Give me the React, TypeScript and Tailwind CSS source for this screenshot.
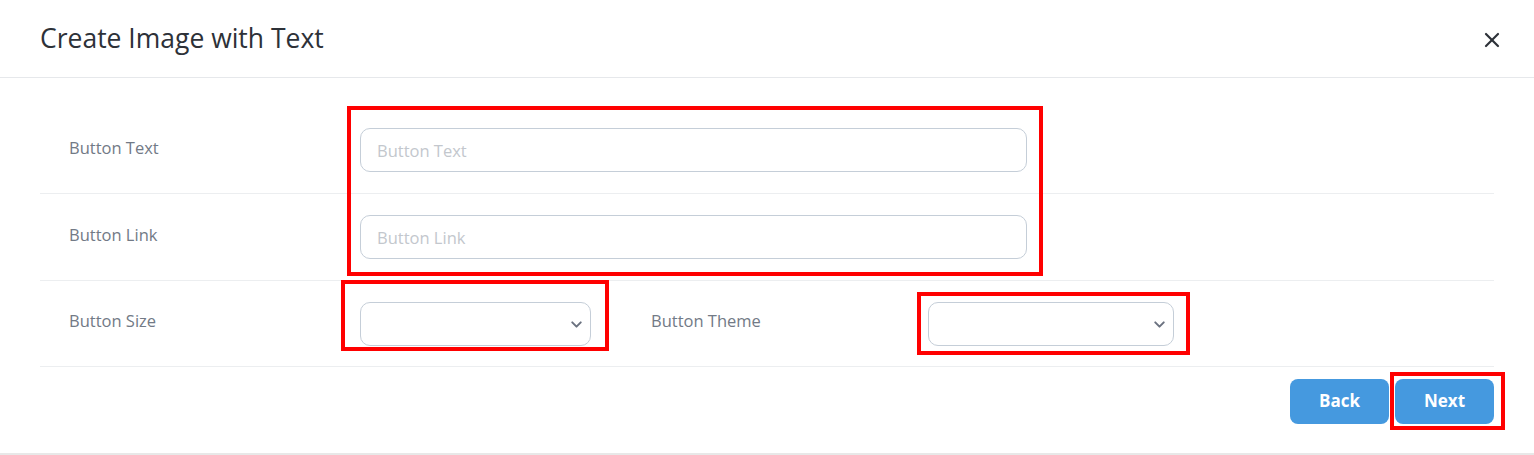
import { X, ChevronDown } from 'lucide-react';

const font = { fontFamily: '"Open Sans", "Noto Sans", sans-serif' };

function Field({ placeholder }: { placeholder: string }) {
  return (
    <input
      placeholder={placeholder}
      className="h-[44px] w-[667px] rounded-[10px] border border-[#c5ced8] px-4 text-[16.5px] text-[#4a5568] placeholder:text-[#c3c7cd] outline-none"
    />
  );
}

function Select({ width }: { width: string }) {
  return (
    <div className={`relative h-[44px] ${width} rounded-[10px] border border-[#c5ced8] bg-white`}>
      <ChevronDown className="absolute right-[5px] top-[13px] h-[17px] w-[17px] text-[#6b7280]" strokeWidth={2.8} />
    </div>
  );
}

export default function App() {
  return (
    <div className="relative h-[455px] w-full bg-white" style={font}>
      {/* header */}
      <div className="flex h-[78px] items-center justify-between border-b border-[#e6e8eb] pl-[40px] pr-[30px]">
        <h1 className="text-[26.5px] text-[#2d3138]">Create Image with Text</h1>
        <X className="mt-[2px] h-[24px] w-[24px] text-[#2d3138]" strokeWidth={2.2} />
      </div>

      {/* body */}
      <div className="px-[40px] pt-[29px]">
        <div className="flex h-[87px] items-center border-b border-[#eceef0] pl-[29px]">
          <div className="w-[291px] pb-[4px] text-[16.5px] text-[#727a86]">Button Text</div>
          <Field placeholder="Button Text" />
        </div>
        <div className="flex h-[87px] items-center border-b border-[#eceef0] pl-[29px]">
          <div className="w-[291px] pb-[4px] text-[16.5px] text-[#727a86]">Button Link</div>
          <Field placeholder="Button Link" />
        </div>
        <div className="flex h-[86px] items-center border-b border-[#eceef0] pl-[29px]">
          <div className="w-[291px] pb-[4px] text-[16.5px] text-[#727a86]">Button Size</div>
          <Select width="w-[231px]" />
          <div className="ml-[60px] w-[277px] pb-[4px] text-[16.5px] text-[#727a86]">Button Theme</div>
          <Select width="w-[246px]" />
        </div>
        <div className="flex justify-end gap-[6px] pt-[12px]">
          <button className="h-[45px] w-[99px] rounded-[8px] bg-[#4599df] pb-[2px] text-[17px] font-bold text-white">Back</button>
          <button className="h-[45px] w-[99px] rounded-[8px] bg-[#4599df] pb-[2px] text-[17px] font-bold text-white">Next</button>
        </div>
      </div>

      <div className="absolute bottom-0 left-0 right-0 border-b-2 border-[#e8e8e8]" />

      {/* annotation boxes */}
      <div className="pointer-events-none absolute left-[347px] top-[106px] h-[170px] w-[696px] border-4 border-[#ff0000]" />
      <div className="pointer-events-none absolute left-[341px] top-[280px] h-[71px] w-[268px] border-4 border-[#ff0000]" />
      <div className="pointer-events-none absolute left-[917px] top-[292px] h-[63px] w-[273px] border-4 border-[#ff0000]" />
      <div className="pointer-events-none absolute left-[1390px] top-[372px] h-[58px] w-[115px] border-4 border-[#ff0000]" />
    </div>
  );
}
